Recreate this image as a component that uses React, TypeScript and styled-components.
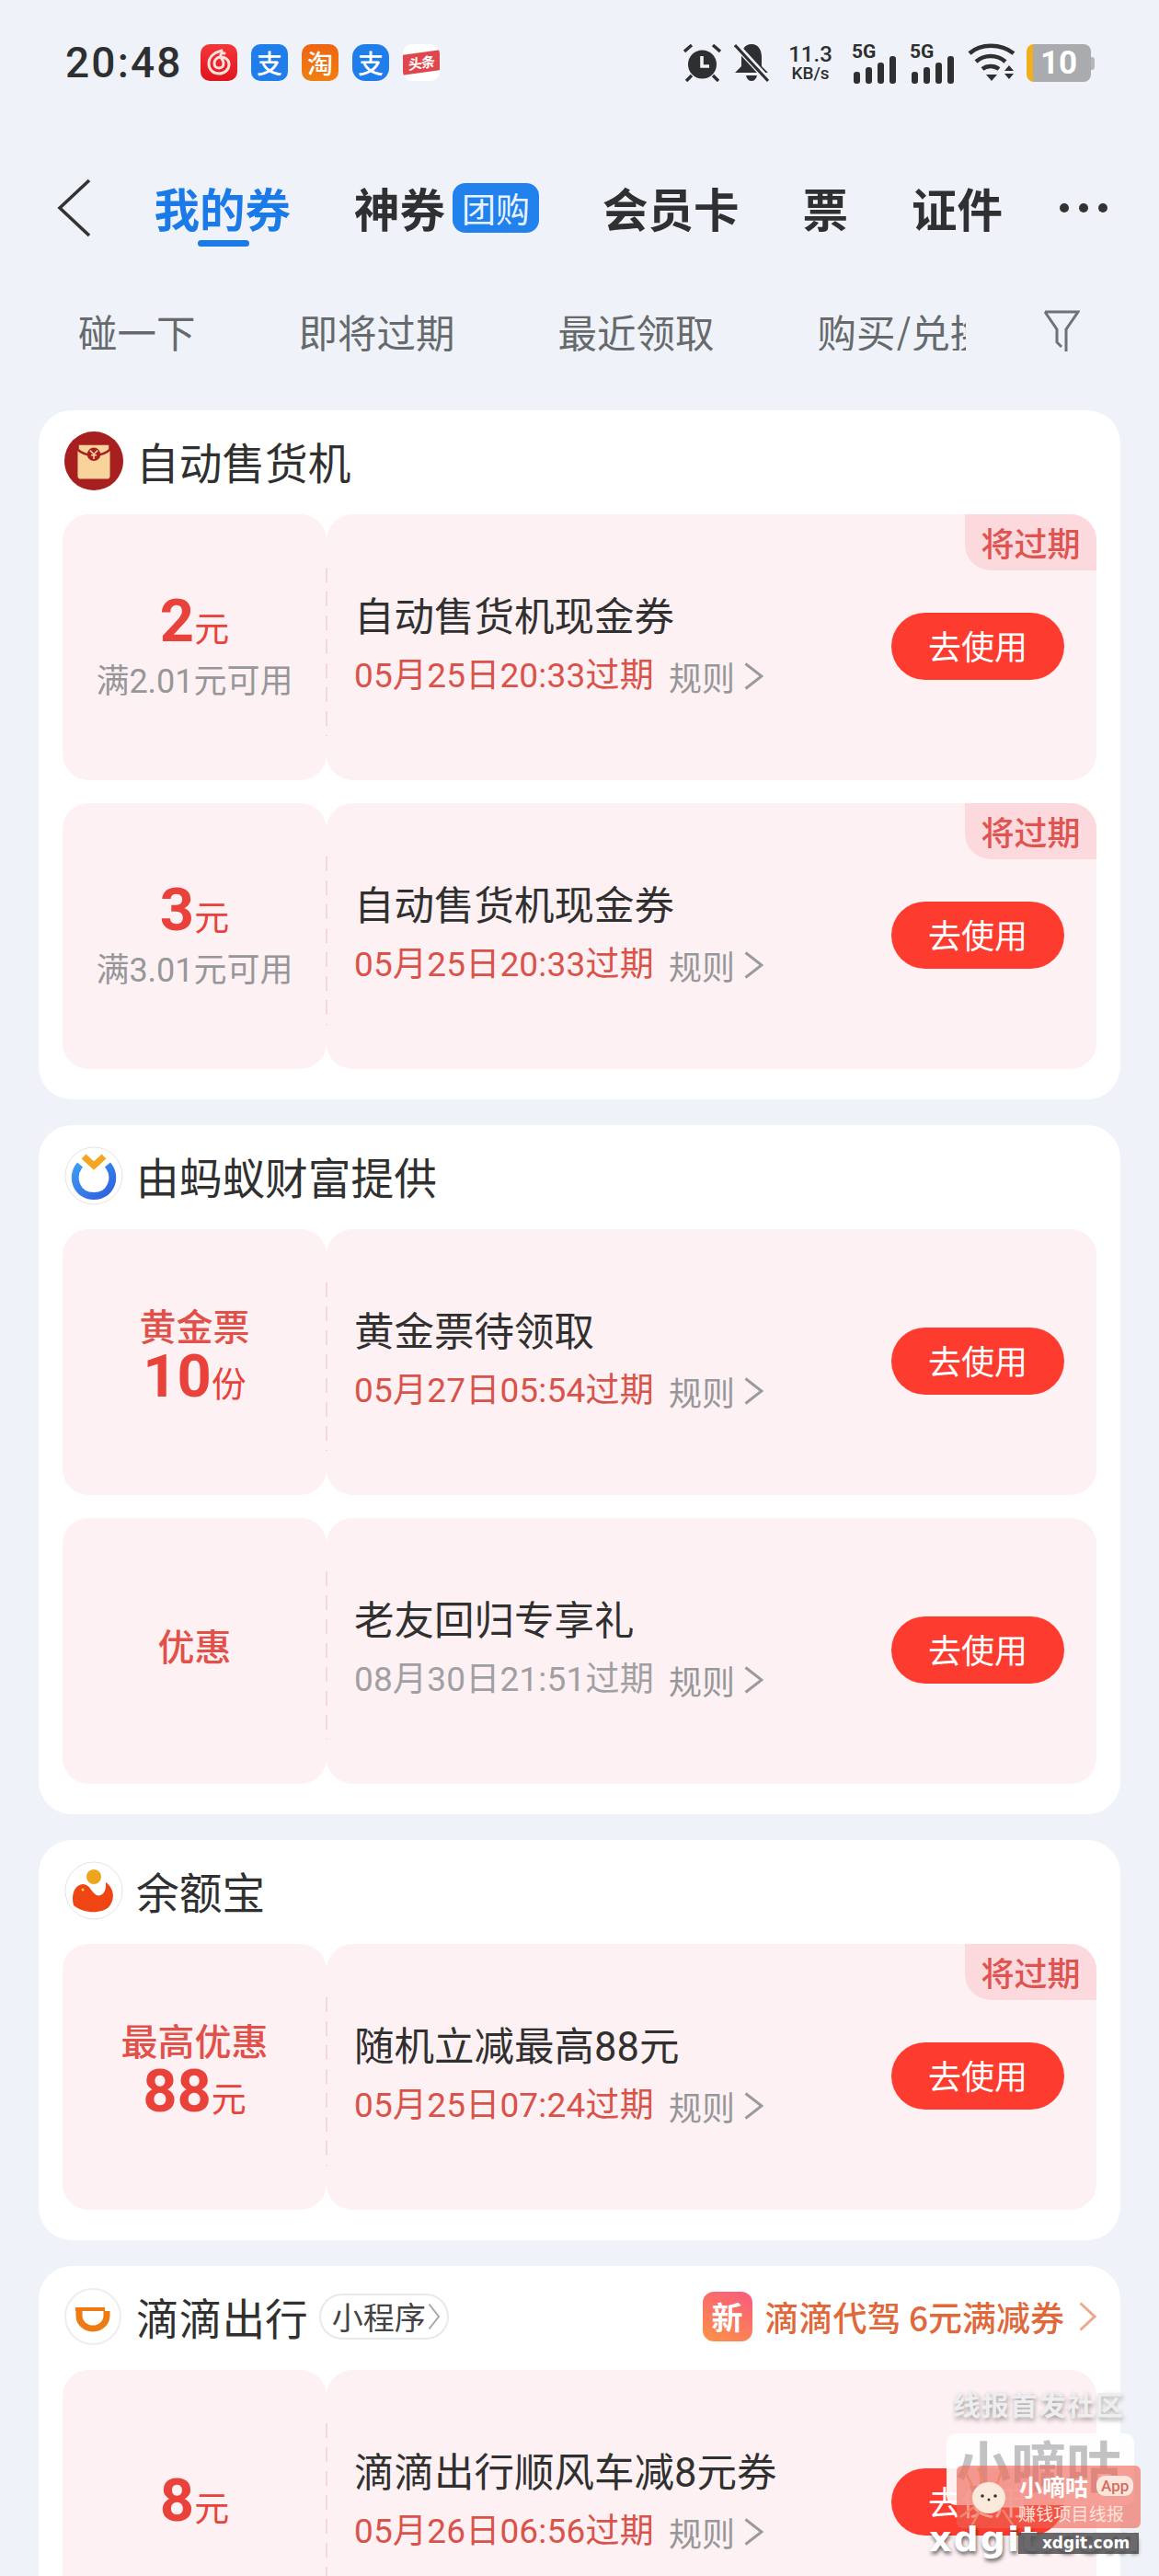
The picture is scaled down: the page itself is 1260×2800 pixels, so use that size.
import styled, { createGlobalStyle } from 'styled-components'

const CJK = `"Noto Sans CJK SC", "Noto Sans", sans-serif`
const NUM = `Roboto, "Noto Sans CJK SC", sans-serif`

const Global = createGlobalStyle`
	html, body {
		margin: 0;
		padding: 0;
		background: #eff3f9;
	}
	body {
		font-family: ${CJK};
		color: #333;
	}
`

const Page = styled.div`
	position: relative;
	width: 1260px;
	height: 2800px;
	overflow: hidden;
	background: #eff3f9;
`

/* status bar */
const StatusBar = styled.div`
	display: flex;
	align-items: center;
	height: 136px;
	padding: 0 70px 0 71px;
	box-sizing: border-box;
`

const Clock = styled.div`
	font-family: ${NUM};
	font-size: 46px;
	font-weight: 500;
	letter-spacing: 2.2px;
	color: #2d2f30;
	width: 147px;
	line-height: 1;
`

const AppIcons = styled.div`
	display: flex;
	gap: 15px;
`

const AppIcon = styled.div<{ $bg: string; $round?: boolean }>`
	position: relative;
	width: 40px;
	height: 40px;
	border-radius: ${p => (p.$round ? '14px' : '10px')};
	background: ${p => p.$bg};
	display: flex;
	align-items: center;
	justify-content: center;
	color: #fff;
	font-size: 28px;
	line-height: 1;
	font-weight: 500;
	overflow: hidden;
`

const ToutiaoBand = styled.div`
	width: 100%;
	height: 22px;
	background: #e0474c;
	font-size: 15px;
	font-weight: 700;
	line-height: 22px;
	text-align: center;
	letter-spacing: -1px;
	transform: skewY(-8deg);
`

const StatusRight = styled.div`
	margin-left: auto;
	display: flex;
	align-items: center;
	color: #2d2f30;
`

const SlotGap = styled.div`
	width: 14px;
`

const Speed = styled.div`
	width: 50px;
	margin: 0 20px 0 20px;
	font-family: ${NUM};
	font-weight: 500;
	text-align: center;
	line-height: 1;
	font-size: 24px;
	white-space: nowrap;
	small {
		display: block;
		font-size: 19px;
		margin-top: -1px;
	}
`

const Signal = styled.div`
	position: relative;
	width: 49px;
	height: 42px;
	margin-right: 14px;
	font-family: ${NUM};
	font-weight: 700;
	font-size: 21px;
	line-height: 1;
	margin-top: -3px;
`

const SignalBars = styled.svg`
	position: absolute;
	left: 2px;
	bottom: -3px;
`

const Battery = styled.div`
	position: relative;
	display: flex;
	align-items: center;
	justify-content: center;
	width: 70px;
	height: 41px;
	margin-left: 12px;
	margin-right: 4px;
	box-sizing: border-box;
	padding-right: 7px;
	border-radius: 8px;
	border-left: 7px solid #f0b01e;
	background: #a9abae;
	color: #fff;
	font-family: ${NUM};
	font-weight: 700;
	font-size: 35px;
	line-height: 1;
	&::after {
		content: "";
		position: absolute;
		right: -4px;
		top: 14px;
		width: 4px;
		height: 14px;
		border-radius: 0 3px 3px 0;
		background: #b4b6b8;
	}
`

/* top nav */
const Nav = styled.div`
	display: flex;
	align-items: center;
	height: 182px;
	padding: 0 0 3px 62px;
	box-sizing: border-box;
`

const BackBtn = styled.div`
	width: 105.5px;
	display: flex;
`

const Tabs = styled.div`
	display: flex;
	align-items: center;
	gap: 69px;
`

const Tab = styled.div<{ $active?: boolean }>`
	position: relative;
	display: flex;
	align-items: center;
	font-size: 49.5px;
	font-weight: 700;
	line-height: 60px;
	white-space: nowrap;
	color: ${p => (p.$active ? '#1a7ae8' : '#2f3031')};
	${p => p.$active && `
		&::after {
			content: "";
			position: absolute;
			left: 47px;
			bottom: -12px;
			width: 56px;
			height: 7px;
			border-radius: 4px;
			background: #1a7ae8;
		}
	`}
`

const GroupBadge = styled.span`
	margin-left: 8px;
	width: 94px;
	height: 54px;
	border-radius: 14px;
	background: #2181ed;
	color: #e9f3ff;
	font-size: 37px;
	font-weight: 400;
	line-height: 54px;
	text-align: center;
`

const MoreDots = styled.div`
	display: flex;
	gap: 11px;
	margin-left: -7px;
	span {
		width: 10px;
		height: 10px;
		border-radius: 50%;
		background: #333;
	}
`

/* filter row */
const FilterRow = styled.div`
	display: flex;
	align-items: center;
	height: 86px;
	padding: 0 0 2px 85px;
	box-sizing: border-box;
	gap: 112px;
	font-size: 42.5px;
	color: #666a6d;
	line-height: 1;
	white-space: nowrap;
`

const FilterItem = styled.div<{ $clip?: boolean }>`
	${p => p.$clip && `
		width: 161px;
		overflow: hidden;
		margin-right: -28px;
	`}
`

/* cards */
const CardList = styled.div`
	display: flex;
	flex-direction: column;
	gap: 28px;
	padding: 42px 42px 0;
`

const Card = styled.section`
	background: #fff;
	border-radius: 36px;
	padding: 0 26px 33px;
`

const CardHead = styled.div`
	display: flex;
	align-items: center;
	height: 113px;
	box-sizing: border-box;
	padding-bottom: 4px;
`

const Brand = styled.div`
	margin-left: 2px;
	width: 78px;
	display: flex;
	svg {
		display: block;
	}
`

const BrandName = styled.div`
	font-size: 46.7px;
	line-height: 60px;
	color: #303030;
`

const MiniTag = styled.div`
	display: flex;
	align-items: center;
	margin-left: 12px;
	height: 50px;
	box-sizing: border-box;
	padding: 0 7px 0 12px;
	border: 2px solid #e8e9ea;
	border-radius: 25px;
	font-size: 34px;
	color: #444;
	gap: 2px;
`

const Promo = styled.div`
	margin-left: auto;
	display: flex;
	align-items: center;
	font-size: 37px;
	font-weight: 500;
	color: #e0683a;
	white-space: nowrap;
`

const NewBadge = styled.div`
	width: 54px;
	height: 54px;
	border-radius: 12px;
	margin-right: 14px;
	background: linear-gradient(25deg, #fb9347, #f9597d);
	color: #fff;
	font-size: 34px;
	font-weight: 700;
	line-height: 54px;
	text-align: center;
`

const PromoArrow = styled.div`
	margin-left: 16px;
`

const Coupons = styled.div`
	display: flex;
	flex-direction: column;
	gap: 25px;
`

const Coupon = styled.div`
	position: relative;
	display: flex;
	height: 289px;
`

const Side = styled.div`
	flex: 0 0 287px;
	display: flex;
	flex-direction: column;
	align-items: center;
	justify-content: center;
	background: #fef1f3;
	border-radius: 28px;
	color: #e8423a;
`

const Main = styled.div`
	position: relative;
	flex: 1;
	display: flex;
	align-items: center;
	justify-content: space-between;
	padding: 0 35px 0 30px;
	background: #fef1f3;
	border-radius: 28px;
	&::before {
		content: "";
		position: absolute;
		left: -1px;
		top: 58px;
		bottom: 48px;
		width: 2px;
		background: repeating-linear-gradient(to bottom, #f6d8dc 0 16px, transparent 16px 26px);
	}
`

const Amount = styled.div`
	display: flex;
	align-items: baseline;
	line-height: 62px;
	font-size: 38px;
	color: #e8423a;
	b {
		font-family: ${NUM};
		font-size: 65px;
		font-weight: 700;
	}
`

const SideLabel = styled.div`
	font-size: 40px;
	line-height: 50px;
	font-weight: 500;
	color: #e2504a;
`

const SideNote = styled.div`
	margin-top: 6px;
	font-family: ${NUM};
	font-size: 36px;
	line-height: 46px;
	color: #97979a;
	white-space: nowrap;
`

const SideStack = styled.div`
	display: flex;
	flex-direction: column;
	align-items: center;
	margin-top: -14px;
`

const Info = styled.div`
	display: flex;
	flex-direction: column;
	gap: 9px;
`

const Title = styled.div`
	font-family: ${NUM};
	font-size: 43.5px;
	line-height: 54px;
	color: #303030;
	white-space: nowrap;
`

const Meta = styled.div`
	display: flex;
	align-items: center;
	line-height: 54px;
	white-space: nowrap;
`

const Expire = styled.span<{ $muted?: boolean }>`
	font-family: ${NUM};
	font-size: 37px;
	letter-spacing: 0.2px;
	color: ${p => (p.$muted ? '#a0a0a3' : '#d9534a')};
`

const Rule = styled.span`
	margin-left: 16px;
	font-size: 36px;
	color: #97979a;
`

const RuleArrow = styled.div`
	margin-left: 10px;
`

const UseBtn = styled.div`
	flex: 0 0 188px;
	height: 73px;
	margin-top: -2px;
	border-radius: 37px;
	background: #fd3c2f;
	color: #fff;
	font-size: 36px;
	line-height: 71px;
	text-align: center;
`

const ExpireTag = styled.div`
	position: absolute;
	top: 0;
	right: 0;
	width: 143px;
	height: 61px;
	border-radius: 0 28px 0 28px;
	background: #fcd9dd;
	color: #df5450;
	font-size: 36px;
	font-weight: 500;
	line-height: 60px;
	text-align: center;
`

/* watermark laid over the bottom right corner */
const Watermark = styled.div`
	position: absolute;
	inset: 0;
	pointer-events: none;
`

const WmSlogan = styled.div`
	position: absolute;
	left: 1036px;
	top: 2594px;
	font-size: 30px;
	line-height: 36px;
	font-weight: 700;
	letter-spacing: 1px;
	color: #eceef0;
	text-shadow: 1px 3px 5px rgba(0, 0, 0, .35);
	white-space: nowrap;
`

const WmBox = styled.div`
	position: absolute;
	left: 1029px;
	top: 2645px;
	width: 204px;
	height: 78px;
	border-radius: 10px;
	background: rgba(255, 255, 255, .92);
	color: #c2c2c4;
	font-size: 60px;
	font-weight: 700;
	line-height: 66px;
	padding-left: 10px;
	box-sizing: border-box;
	white-space: nowrap;
`

const WmPanel = styled.div`
	position: absolute;
	left: 1040px;
	top: 2680px;
	width: 200px;
	height: 68px;
	border-radius: 6px;
	background: rgba(238, 98, 84, .62);
`

const WmHead = styled.svg`
	position: absolute;
	left: 1040px;
	top: 2680px;
`

const WmName = styled.div`
	position: absolute;
	left: 1108px;
	top: 2684px;
	display: flex;
	align-items: center;
	gap: 9px;
	font-size: 25px;
	font-weight: 700;
	color: #fff;
	line-height: 36px;
	span {
		padding: 0 5px;
		height: 22px;
		border-radius: 9px;
		background: #fbe6dc;
		color: #d66a5c;
		font-family: ${NUM};
		font-size: 17px;
		font-weight: 500;
		line-height: 22px;
	}
`

const WmLine = styled.div`
	position: absolute;
	left: 1107px;
	top: 2718px;
	font-size: 19px;
	line-height: 28px;
	letter-spacing: 0.2px;
	color: #fde3dc;
	white-space: nowrap;
`

const WmDomain = styled.div`
	position: absolute;
	left: 1010px;
	top: 2735px;
	font-family: "DejaVu Sans", sans-serif;
	font-size: 38px;
	font-weight: 700;
	line-height: 50px;
	letter-spacing: 2px;
	color: #fff;
	text-shadow: 1px 3px 4px rgba(0, 0, 0, .6);
	white-space: nowrap;
`

const WmBar = styled.div`
	position: absolute;
	left: 1107px;
	top: 2753px;
	width: 131px;
	height: 23px;
	box-sizing: border-box;
	padding-left: 16px;
	background: rgba(80, 80, 84, .85);
	color: #fff;
	font-family: "DejaVu Sans", sans-serif;
	font-size: 17px;
	font-weight: 700;
	line-height: 23px;
	text-align: center;
`

const Chevron = ({ w, h, color, stroke = 3 }: { w: number; h: number; color: string; stroke?: number }) => (
	<svg width={w} height={h} viewBox={`0 0 ${w} ${h}`} fill="none" style={{ display: 'block' }}>
		<path d={`M1.5 1.5 L${w - 2} ${h / 2} L1.5 ${h - 1.5}`} stroke={color} strokeWidth={stroke} />
	</svg>
)

const NeteaseIcon = () => (
	<AppIcon $bg="linear-gradient(180deg,#f2373a,#e0141c)">
		<svg width="32" height="32" viewBox="0 0 32 32" fill="none" stroke="#fbe0dc" strokeWidth="3" strokeLinecap="round">
			<path d="M19 3 C11 5 5 10 5 17 C5 24 10 28 16 28 C22 28 27 24 27 18 C27 13 23 10 18 10 C14 10 11 13 11 17 C11 20 13 22 16 22 C19 22 21 20 21 17 C21 14 19 12 18 10 C17 7 19 5 22 6" />
		</svg>
	</AppIcon>
)

const AlarmIcon = () => (
	<svg width="41" height="42" viewBox="0 0 41 42" style={{ display: 'block' }}>
		<circle cx="20.5" cy="23" r="15.5" fill="#2d2f30" />
		<path d="M20 14 V25 H28" fill="none" stroke="#eff3f9" strokeWidth="3.6" />
		<path d="M1 9 L9 2 M40 9 L32 2 M9 35 L3 41 M32 35 L38 41" stroke="#2d2f30" strokeWidth="3.4" />
	</svg>
)

const BellOffIcon = () => (
	<svg width="38" height="42" viewBox="0 0 38 42" style={{ display: 'block' }}>
		<path d="M19 1 C27 1 30 8 30 15 V25 L37 32 H1 L8 25 V15 C8 8 11 1 19 1 Z M13 35 H25 C24 39 22 41 19 41 C16 41 14 39 13 35 Z" fill="#2d2f30" />
		<path d="M1 1 L37 40" stroke="#eff3f9" strokeWidth="7" />
		<path d="M1 2 L37 41" stroke="#2d2f30" strokeWidth="3" />
	</svg>
)

const SignalIcon = () => (
	<Signal>
		5G
		<SignalBars width="46" height="30" viewBox="0 0 46 30" fill="#2d2f30">
			<rect x="0" y="17" width="7" height="13" rx="3" />
			<rect x="13" y="12" width="7" height="18" rx="3" />
			<rect x="26" y="7" width="7" height="23" rx="3" />
			<rect x="39" y="0" width="7" height="30" rx="3" />
		</SignalBars>
	</Signal>
)

const WifiIcon = () => (
	<svg width="52" height="42" viewBox="0 0 52 42" fill="none" style={{ display: 'block' }}>
		<path d="M2 11 C14 0 36 0 50 11" stroke="#2d2f30" strokeWidth="4.5" />
		<path d="M9 20 C18 12 32 12 41 20" stroke="#2d2f30" strokeWidth="4.5" />
		<path d="M16 28 C21 24 29 24 34 28" stroke="#2d2f30" strokeWidth="4.5" />
		<path d="M20 34 H32 L26 41 Z M40 30 L45 24 L50 30 Z M40 33 H50 L45 39 Z" fill="#2d2f30" />
	</svg>
)

const BackIcon = () => (
	<svg width="38" height="64" viewBox="0 0 38 64" fill="none" style={{ display: 'block' }}>
		<path d="M35 2 L3 32 L35 62" stroke="#333" strokeWidth="3.6" />
	</svg>
)

const FunnelIcon = () => (
	<svg width="40" height="48" viewBox="0 0 40 48" fill="none" style={{ display: 'block' }}>
		<path d="M2 3 H38 L25 22 V46 M2 3 L15 22 V36 L20 41" stroke="#6f7376" strokeWidth="3" />
	</svg>
)

const EnvelopeLogo = () => (
	<svg width="64" height="64" viewBox="0 0 62 62">
		<circle cx="31" cy="31" r="31" fill="#a81f1f" />
		<rect x="14" y="13" width="34" height="37" rx="3" fill="#f8d49c" />
		<path d="M14 13 H48 V19 C40 27 22 27 14 19 Z" fill="#f8d49c" stroke="#a81f1f" strokeWidth="2.5" />
		<circle cx="31" cy="24" r="7" fill="#a81f1f" />
		<path d="M27 20 L31 24 L35 20 M31 24 V29 M28 25 H34" stroke="#f8d49c" strokeWidth="1.5" fill="none" />
	</svg>
)

const AntLogo = () => (
	<svg width="64" height="64" viewBox="0 0 64 64" fill="none">
		<defs>
			<linearGradient id="antRing" x1="0" y1="0" x2="1" y2="1">
				<stop offset="0" stopColor="#3e9cf0" />
				<stop offset="1" stopColor="#2f5fe0" />
			</linearGradient>
		</defs>
		<circle cx="32" cy="32" r="31" fill="#fff" stroke="#e4e4e4" />
		<path d="M17 20 C6 33 13 54 32 54 C51 54 58 33 47 20" stroke="url(#antRing)" strokeWidth="8" />
		<path d="M21 11 L32 21 L43 11" stroke="#f4a623" strokeWidth="7" />
	</svg>
)

const YebLogo = () => (
	<svg width="64" height="64" viewBox="0 0 64 64">
		<circle cx="32" cy="32" r="31" fill="#fff" stroke="#e4e4e4" />
		<circle cx="32" cy="17" r="8" fill="#eda51e" />
		<path d="M10 48 C7 36 11 26 20 25 C28 25 29 34 35 37 C41 39 46 33 45 23 C53 28 56 40 49 49 C42 57 22 58 10 48 Z" fill="#ee4513" />
		<circle cx="20" cy="31" r="1.5" fill="#f8d24a" />
	</svg>
)

const DidiLogo = () => (
	<svg width="62" height="64" viewBox="0 0 62 64" fill="none">
		<circle cx="31" cy="32" r="30" fill="#fff" stroke="#eeeeee" strokeWidth="2" />
		<path d="M16 26 V31 C16 39 23 45 31 45 C39 45 46 39 46 31 C46 29 46 28 46 26" stroke="#ee7a12" strokeWidth="7" />
		<path d="M12 22 H44 V26 H12 Z" fill="#ee7a12" />
	</svg>
)

type CouponData = {
	side: React.ReactNode
	title: string
	expire: string
	muted?: boolean
	soon?: boolean
}

const CouponRow = ({ side, title, expire, muted, soon }: CouponData) => (
	<Coupon>
		<Side>{side}</Side>
		<Main>
			<Info>
				<Title>{title}</Title>
				<Meta>
					<Expire $muted={muted}>{expire}</Expire>
					<Rule>规则</Rule>
					<RuleArrow><Chevron w={21} h={30} color="#9a9a9d" /></RuleArrow>
				</Meta>
			</Info>
			<UseBtn>去使用</UseBtn>
		</Main>
		{soon && <ExpireTag>将过期</ExpireTag>}
	</Coupon>
)

export default function App() {
	return (
		<Page>
			<Global />
			<StatusBar>
				<Clock>20:48</Clock>
				<AppIcons>
					<NeteaseIcon />
					<AppIcon $bg="#1f7eea">支</AppIcon>
					<AppIcon $bg="linear-gradient(180deg,#ee6412,#f08012)">淘</AppIcon>
					<AppIcon $bg="#1f7eea" $round>支</AppIcon>
					<AppIcon $bg="#fff"><ToutiaoBand>头条</ToutiaoBand></AppIcon>
				</AppIcons>
				<StatusRight>
					<AlarmIcon />
					<SlotGap />
					<BellOffIcon />
					<Speed>11.3<small>KB/s</small></Speed>
					<SignalIcon />
					<SignalIcon />
					<WifiIcon />
					<Battery>10</Battery>
				</StatusRight>
			</StatusBar>

			<Nav>
				<BackBtn><BackIcon /></BackBtn>
				<Tabs>
					<Tab $active>我的券</Tab>
					<Tab>神券<GroupBadge>团购</GroupBadge></Tab>
					<Tab>会员卡</Tab>
					<Tab>票</Tab>
					<Tab>证件</Tab>
					<MoreDots><span /><span /><span /></MoreDots>
				</Tabs>
			</Nav>

			<FilterRow>
				<FilterItem>碰一下</FilterItem>
				<FilterItem>即将过期</FilterItem>
				<FilterItem>最近领取</FilterItem>
				<FilterItem $clip>购买/兑换</FilterItem>
				<FunnelIcon />
			</FilterRow>

			<CardList>
				<Card>
					<CardHead>
						<Brand><EnvelopeLogo /></Brand>
						<BrandName>自动售货机</BrandName>
					</CardHead>
					<Coupons>
						<CouponRow
							soon
							title="自动售货机现金券"
							expire="05月25日20:33过期"
							side={<><Amount><b>2</b>元</Amount><SideNote>满2.01元可用</SideNote></>}
						/>
						<CouponRow
							soon
							title="自动售货机现金券"
							expire="05月25日20:33过期"
							side={<><Amount><b>3</b>元</Amount><SideNote>满3.01元可用</SideNote></>}
						/>
					</Coupons>
				</Card>

				<Card>
					<CardHead>
						<Brand><AntLogo /></Brand>
						<BrandName>由蚂蚁财富提供</BrandName>
					</CardHead>
					<Coupons>
						<CouponRow
							title="黄金票待领取"
							expire="05月27日05:54过期"
							side={<SideStack><SideLabel>黄金票</SideLabel><Amount><b>10</b>份</Amount></SideStack>}
						/>
						<CouponRow
							muted
							title="老友回归专享礼"
							expire="08月30日21:51过期"
							side={<SideStack><SideLabel>优惠</SideLabel></SideStack>}
						/>
					</Coupons>
				</Card>

				<Card>
					<CardHead>
						<Brand><YebLogo /></Brand>
						<BrandName>余额宝</BrandName>
					</CardHead>
					<Coupons>
						<CouponRow
							soon
							title="随机立减最高88元"
							expire="05月25日07:24过期"
							side={<SideStack><SideLabel>最高优惠</SideLabel><Amount><b>88</b>元</Amount></SideStack>}
						/>
					</Coupons>
				</Card>

				<Card>
					<CardHead>
						<Brand><DidiLogo /></Brand>
						<BrandName>滴滴出行</BrandName>
						<MiniTag>小程序<Chevron w={14} h={30} color="#a8a8a8" stroke={2} /></MiniTag>
						<Promo>
							<NewBadge>新</NewBadge>
							滴滴代驾 6元满减券
							<PromoArrow><Chevron w={19} h={32} color="#eda98a" /></PromoArrow>
						</Promo>
					</CardHead>
					<Coupons>
						<CouponRow
							title="滴滴出行顺风车减8元券"
							expire="05月26日06:56过期"
							side={<Amount><b>8</b>元</Amount>}
						/>
					</Coupons>
				</Card>
			</CardList>

			<Watermark>
				<WmSlogan>线报首发社区</WmSlogan>
				<WmBox>小嘀咕</WmBox>
				<WmPanel />
				<WmHead width="90" height="68" viewBox="0 0 90 68" fill="none">
					<path d="M8 4 L18 24 M24 2 L28 20 M50 2 L44 20 M4 56 L20 44 M16 66 L26 48 M62 66 L50 48" stroke="#f0876a" strokeWidth="2.5" />
					<ellipse cx="35" cy="35" rx="18" ry="17" fill="#fbe9dc" />
					<circle cx="28" cy="33" r="1.8" fill="#333" />
					<circle cx="42" cy="33" r="1.8" fill="#333" />
					<circle cx="35" cy="37" r="1.5" fill="#333" />
				</WmHead>
				<WmName>小嘀咕<span>App</span></WmName>
				<WmLine>赚钱项目线报</WmLine>
				<WmDomain>xdgit.com</WmDomain>
				<WmBar>xdgit.com</WmBar>
			</Watermark>
		</Page>
	)
}
